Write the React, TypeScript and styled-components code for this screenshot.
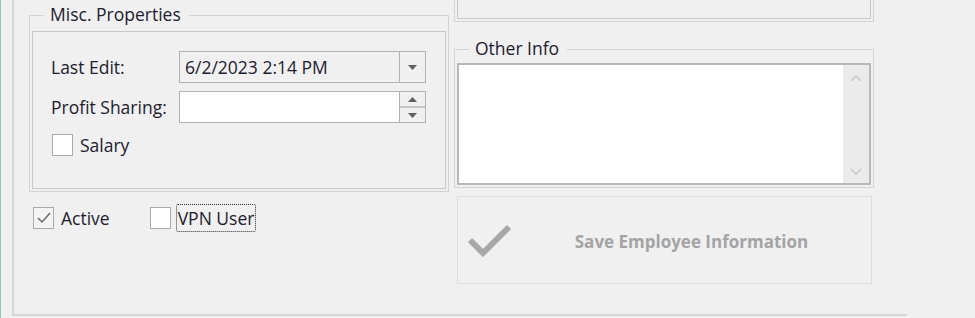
import React from "react";
import styled, { createGlobalStyle } from "styled-components";

const GlobalStyle = createGlobalStyle`
  html, body {
    margin: 0;
    padding: 0;
    background: #f0f0f0;
  }
  body {
    font-family: "Open Sans", "Noto Sans", sans-serif;
    font-size: 17.5px;
    color: #1c1c2e;
  }
`;

const Screen = styled.div`
  width: 975px;
  height: 318px;
  overflow: hidden;
  box-sizing: border-box;
  border-left: 1px solid #8fc7c0;
  padding-left: 11px;
`;

const Page = styled.div`
  width: 895px;
  height: 316px;
  box-sizing: border-box;
  border-left: 2px solid #d6d6d6;
  border-bottom: 2px solid #d6d6d6;
  padding-left: 15px;
  display: grid;
  grid-template-columns: 420px 420px;
  column-gap: 5px;
  align-items: start;
`;

const Column = styled.div`
  display: flex;
  flex-direction: column;
`;

// group frame: top line at margin-top, caption sits over the line
const Group = styled.section<{ $top: number }>`
  margin-top: ${(p) => p.$top}px;
  border: 1px solid #d3d3d3;
  padding: 0 2px 2px;
`;

const Caption = styled.div<{ $gap: number }>`
  margin: -12px 0 ${(p) => p.$gap}px 12px;
  padding: 0 8px 0 6px;
  width: fit-content;
  height: 20px;
  line-height: 20px;
  background: #f0f0f0;
`;

const InnerPanel = styled.div`
  height: 158px;
  box-sizing: border-box;
  border: 1px solid #c8c8c8;
  padding: 19px 18px 0;
  display: flex;
  flex-direction: column;
  gap: 8px;
`;

const FieldRow = styled.div`
  display: flex;
  align-items: center;
`;

const Label = styled.span`
  width: 128px;
  white-space: nowrap;
`;

const Field = styled.div<{ $white?: boolean }>`
  width: 247px;
  height: 32px;
  box-sizing: border-box;
  border: 1px solid #b2b2b2;
  background: ${(p) => (p.$white ? "#ffffff" : "#f0f0f0")};
  display: flex;
`;

const FieldText = styled.div`
  flex: 1;
  padding-left: 5px;
  line-height: 30px;
`;

const DropButton = styled.div`
  width: 25px;
  border-left: 1px solid #b2b2b2;
  background: #f0f0f0;
  display: flex;
  align-items: center;
  justify-content: center;
`;

const SpinStack = styled.div`
  width: 25px;
  display: flex;
  flex-direction: column;
  border-left: 1px solid #b2b2b2;
  background: #f0f0f0;
`;

const SpinButton = styled.div<{ $first?: boolean }>`
  flex: 1;
  display: flex;
  align-items: center;
  justify-content: center;
  border-bottom: ${(p) => (p.$first ? "2px solid #c4c4c4" : "none")};
`;

const CheckRow = styled.div<{ $gap: number; $pad: number; $top: number }>`
  display: flex;
  align-items: center;
  gap: ${(p) => p.$gap}px;
  padding-left: ${(p) => p.$pad}px;
  margin-top: ${(p) => p.$top}px;
  height: 28px;
`;

const CheckItem = styled.label`
  display: flex;
  align-items: center;
  gap: 5px;
`;

const Box = styled.span<{ $shade?: boolean }>`
  width: 21px;
  height: 22px;
  box-sizing: border-box;
  border: 1px solid #a9a9a9;
  background: ${(p) => (p.$shade ? "#f4f4f4" : "#ffffff")};
  display: flex;
  align-items: center;
  justify-content: center;
`;

const CheckText = styled.span<{ $focus?: boolean }>`
  padding: 2px 1px;
  border: 1px dotted ${(p) => (p.$focus ? "#333" : "transparent")};
  border-radius: 2px;
  line-height: 22px;
`;

const TopTail = styled.div`
  height: 22px;
  box-sizing: border-box;
  border: 1px solid #d3d3d3;
  border-top: none;
  padding: 0 2px 2px;
`;

const TopTailInner = styled.div`
  height: 100%;
  box-sizing: border-box;
  border: 1px solid #c8c8c8;
  border-top: none;
`;

const Memo = styled.div`
  height: 122px;
  box-sizing: border-box;
  border: 2px solid #b8b8b8;
  background: #ffffff;
  display: flex;
  justify-content: flex-end;
`;

const ScrollBar = styled.div`
  width: 26px;
  background: #ebebeb;
  display: flex;
  flex-direction: column;
  justify-content: space-between;
  align-items: center;
  padding: 10px 0 8px;
`;

const SaveButton = styled.button`
  margin: 8px 2px 0 3px;
  height: 88px;
  border: 1px solid #dcdcdc;
  background: #f0f0f0;
  display: flex;
  align-items: center;
  padding: 2px 0 0 10px;
  font-family: inherit;
  font-size: 17px;
  font-weight: 700;
  color: #a4a4a4;
`;

const SaveLabel = styled.span`
  flex: 1;
  text-align: center;
`;

const Caret = ({ up }: { up?: boolean }) => (
  <svg width="9" height="5" viewBox="0 0 9 5">
    <polygon points={up ? "0,5 9,5 4.5,0" : "0,0 9,0 4.5,5"} fill="#5f5f5f" />
  </svg>
);

const Chevron = ({ up }: { up?: boolean }) => (
  <svg width="12" height="7" viewBox="0 0 12 7">
    <polyline
      points={up ? "1,6 6,1 11,6" : "1,1 6,6 11,1"}
      fill="none"
      stroke="#c8c8c8"
      strokeWidth="1.6"
    />
  </svg>
);

const SmallTick = () => (
  <svg width="14" height="12" viewBox="0 0 14 12">
    <polyline points="1,6 5,10 13,1" fill="none" stroke="#6a6a6a" strokeWidth="1.5" />
  </svg>
);

const BigTick = () => (
  <svg width="44" height="34" viewBox="0 0 44 34">
    <polyline
      points="2,16 15,29 41,3"
      fill="none"
      stroke="#a8a8a8"
      strokeWidth="6"
      strokeLinejoin="miter"
    />
  </svg>
);

export default function App() {
  return (
    <Screen>
      <GlobalStyle />
      <Page>
        <Column>
          <Group $top={15}>
            <Caption $gap={7}>Misc. Properties</Caption>
            <InnerPanel>
              <FieldRow>
                <Label>Last Edit:</Label>
                <Field>
                  <FieldText>6/2/2023 2:14 PM</FieldText>
                  <DropButton>
                    <Caret />
                  </DropButton>
                </Field>
              </FieldRow>
              <FieldRow>
                <Label>Profit Sharing:</Label>
                <Field $white>
                  <FieldText />
                  <SpinStack>
                    <SpinButton $first>
                      <Caret up />
                    </SpinButton>
                    <SpinButton>
                      <Caret />
                    </SpinButton>
                  </SpinStack>
                </Field>
              </FieldRow>
              <CheckRow $gap={0} $pad={1} $top={0}>
                <CheckItem>
                  <Box />
                  <CheckText>Salary</CheckText>
                </CheckItem>
              </CheckRow>
            </InnerPanel>
          </Group>
          <CheckRow $gap={38} $pad={4} $top={12}>
            <CheckItem>
              <Box $shade>
                <SmallTick />
              </Box>
              <CheckText>Active</CheckText>
            </CheckItem>
            <CheckItem>
              <Box />
              <CheckText $focus>VPN User</CheckText>
            </CheckItem>
          </CheckRow>
        </Column>
        <Column>
          <TopTail>
            <TopTailInner />
          </TopTail>
          <Group $top={27}>
            <Caption $gap={5}>Other Info</Caption>
            <Memo>
              <ScrollBar>
                <Chevron up />
                <Chevron />
              </ScrollBar>
            </Memo>
          </Group>
          <SaveButton disabled>
            <BigTick />
            <SaveLabel>Save Employee Information</SaveLabel>
          </SaveButton>
        </Column>
      </Page>
    </Screen>
  );
}
